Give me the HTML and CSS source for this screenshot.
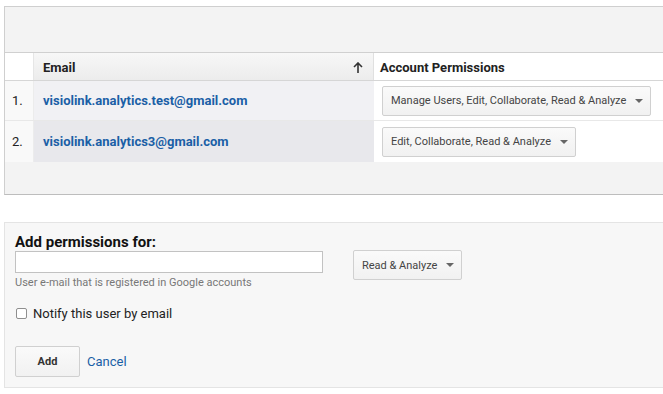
FILE: index.html
```html
<!DOCTYPE html>
<html>
<head>
<meta charset="utf-8">
<link rel="stylesheet" href="styles.css">
</head>
<body>
<div class="table-panel">
  <div class="toolbar"></div>
  <div class="grid">
    <div class="row head">
      <div class="cell num"></div>
      <div class="cell email-h"><span>Email</span>
        <svg class="sort" width="10" height="11" viewBox="0 0 10 11"><path d="M5 1 V11 M1 5 L5 1 L9 5" fill="none" stroke="#333" stroke-width="1.6"/></svg>
      </div>
      <div class="cell perm-h">Account Permissions</div>
    </div>
    <div class="row r1">
      <div class="cell num">1.</div>
      <div class="cell email"><a>visiolink.analytics.test@gmail.com</a></div>
      <div class="cell perm"><button class="select">Manage Users, Edit, Collaborate, Read &amp; Analyze<i class="caret"></i></button></div>
    </div>
    <div class="row r2">
      <div class="cell num">2.</div>
      <div class="cell email"><a>visiolink.analytics3@gmail.com</a></div>
      <div class="cell perm"><button class="select">Edit, Collaborate, Read &amp; Analyze<i class="caret"></i></button></div>
    </div>
  </div>
  <div class="footer"></div>
</div>

<div class="add-panel">
  <div class="add-title">Add permissions for:</div>
  <div class="add-row">
    <div class="field">
      <input class="email-input" type="text">
      <div class="hint">User e-mail that is registered in Google accounts</div>
    </div>
    <button class="select small">Read &amp; Analyze<i class="caret"></i></button>
  </div>
  <label class="notify"><span class="box"></span>Notify this user by email</label>
  <div class="actions">
    <button class="btn">Add</button>
    <a class="cancel">Cancel</a>
  </div>
</div>
</body>
</html>
```
FILE: styles.css
```css
* { box-sizing: border-box; }
html, body { margin: 0; padding: 0; background: #fff; }
body { font-family: Roboto, "Liberation Sans", Arial, sans-serif; color: #222; width: 663px; overflow: hidden; }

.table-panel {
  margin: 6px -20px 0 4px;
  border: 1px solid #cfcfcf;
  border-bottom-color: #bdbdbd;
  background: #f3f3f3;
}
.toolbar { height: 46px; border-bottom: 1px solid #d0d0d0; }
.row { display: grid; grid-template-columns: 29px 340px 1fr; }
.cell { display: flex; align-items: center; }
.head { height: 28px; border-bottom: 1px solid #d6d6d6; background: #fff; }
.head .cell { font-size: 13px; font-weight: 700; color: #222; padding-top: 2px; }
.head .num { background: #fff; border-right: 1px solid #e6e6e6; }
.email-h {
  padding-left: 9px; padding-right: 10px;
  justify-content: space-between;
  background: linear-gradient(#f7f7f7, #ececec);
  border-right: 1px solid #e0e0e0;
}
.perm-h { padding-left: 6px; background: #fff; }

.r1 { border-bottom: 1px solid #e8e8e8; height: 40px; }
.r2 { height: 41px; }
.num { justify-content: flex-start; padding-left: 7px; font-size: 13px; color: #222; background: #f9f9f9; border-right: 1px solid #ececec; }
.email { padding-left: 9px; background: #f1f1f4; }
.r2 .email { background: #e8e8ec; }
.email a { color: #1a5fa6; font-weight: 700; font-size: 13px; }
.perm { padding-left: 8px; background: #fff; }

.select {
  display: inline-flex; align-items: center;
  height: 30px; padding: 0 7px 0 8px;
  font-family: inherit; font-size: 11px; color: #444;
  border: 1px solid #d0d0d0; border-radius: 2px;
  background: linear-gradient(#fafafa, #f1f1f1);
}
.caret {
  display: inline-block; margin-left: 9px;
  width: 0; height: 0;
  border-left: 4px solid transparent; border-right: 4px solid transparent;
  border-top: 4px solid #666;
}
.footer { height: 32px; background: #f3f3f3; }

.add-panel {
  margin: 27px -20px 0 4px;
  height: 166px;
  border: 1px solid #e4e4e4;
  background: #f7f7f7;
  padding: 10px 0 0 10px;
}
.add-title { font-size: 15px; font-weight: 700; color: #111; line-height: 18px; }
.add-row { display: flex; align-items: flex-start; gap: 30px; }
.email-input {
  display: block; width: 308px; height: 22px; margin: 0;
  border: 1px solid #c2c2c2; background: #fff;
}
.hint { font-size: 11px; color: #777; margin-top: 3px; }
.select.small { margin-top: -1px; height: 30px; }
.notify { display: flex; align-items: center; margin-top: 17px; font-size: 13px; color: #222; }
.box {
  width: 11px; height: 11px; margin-right: 6px; margin-left: 1px;
  border: 1px solid #8f8f8f; border-radius: 2px; background: #fff;
}
.actions { display: flex; align-items: center; gap: 7px; margin-top: 25px; }
.btn {
  width: 65px; height: 31px; font-family: inherit; font-size: 11px; font-weight: 700; color: #333;
  border: 1px solid #d0d0d0; border-radius: 2px; background: linear-gradient(#fafafa, #f1f1f1);
}
.cancel { color: #1a5fa6; font-size: 13px; }
```
